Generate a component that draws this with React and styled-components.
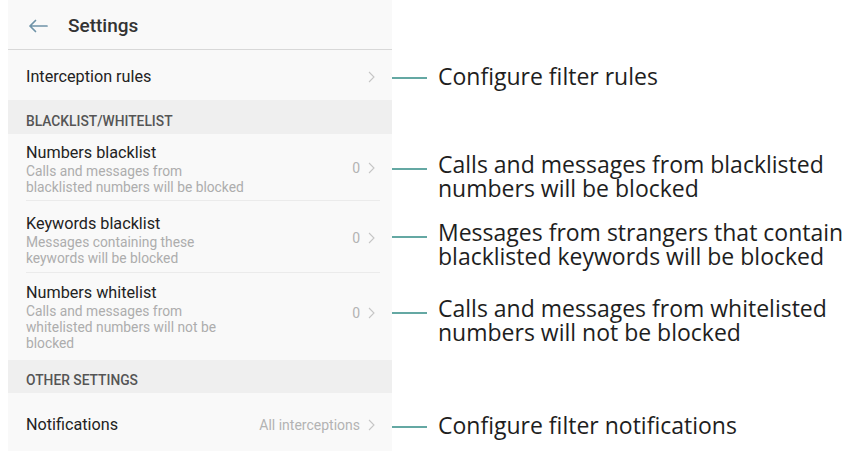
import React from 'react';
import styled, { createGlobalStyle } from 'styled-components';

const GlobalStyle = createGlobalStyle`
  html, body {
    margin: 0;
    padding: 0;
    background: #ffffff;
  }
  body {
    font-family: Roboto, "Liberation Sans", sans-serif;
  }
`;

const Page = styled.div`
  width: 848px;
  height: 451px;
  overflow: hidden;
  display: flex;
  flex-direction: column;
`;

const Row = styled.div`
  display: flex;
  align-items: stretch;
  height: ${(p) => p.$h}px;
  flex: none;
`;

const Cell = styled.div`
  width: 384px;
  margin-left: 8px;
  flex: none;
  box-sizing: border-box;
  background: ${(p) => (p.$band ? '#efefef' : '#f9f9f9')};
  display: flex;
  align-items: ${(p) => (p.$band ? 'flex-end' : 'flex-start')};
  padding: ${(p) => (p.$band ? `0 0 ${p.$bottom}px 18px` : `${p.$top}px 17px 0 18px`)};
  position: relative;
  border-bottom: ${(p) => (p.$line === 'dark' ? '1.5px solid #d8d8d8' : 'none')};

  &::after {
    content: '';
    display: ${(p) => (p.$line === 'light' ? 'block' : 'none')};
    position: absolute;
    left: 18px;
    right: 12px;
    bottom: 0;
    height: 1px;
    background: #ebebeb;
  }
`;

const Header = styled.div`
  display: flex;
  align-items: center;
  gap: 20px;
  padding-left: 2px;
  font-size: 19px;
  line-height: 24px;
  font-weight: 500;
  color: #333;
`;

const BandLabel = styled.div`
  font-size: 13.8px;
  line-height: 16px;
  font-weight: 500;
  color: #555;
`;

const Texts = styled.div`
  flex: 1;
  display: flex;
  flex-direction: column;
`;

const Title = styled.div`
  font-size: 16.2px;
  line-height: 20px;
  color: #222;
`;

const Sub = styled.div`
  font-size: 13.8px;
  line-height: 16px;
  color: #adadad;
  white-space: pre-line;
`;

const Value = styled.div`
  display: flex;
  align-items: center;
  gap: 8px;
  height: 16px;
  font-size: 14px;
  line-height: 16px;
  color: #b3b3b3;
  margin-top: ${(p) => p.$y}px;
`;

const Annotation = styled.div`
  display: flex;
  align-items: flex-start;
  padding-top: ${(p) => p.$top}px;
`;

const Connector = styled.div`
  width: 39px;
  height: 2px;
  background: #64a8a3;
  margin: ${(p) => p.$off}px 11px 0 -4px;
  flex: none;
`;

const Note = styled.div`
  font-family: "Open Sans", "Noto Sans", sans-serif;
  font-size: 23px;
  line-height: 24px;
  color: #1e1e1e;
  white-space: pre-line;
`;

const Chevron = () => (
  <svg width="7" height="12" viewBox="0 0 7 12">
    <polyline points="1,1 6,6 1,11" fill="none" stroke="#c6c6c6" strokeWidth="1.1" />
  </svg>
);

const BackArrow = () => (
  <svg width="20" height="14" viewBox="0 0 20 14">
    <path d="M19 7H2M7.5 1.5L2 7l5.5 5.5" fill="none" stroke="#6f93a8" strokeWidth="1.7" strokeLinecap="round" strokeLinejoin="round" />
  </svg>
);

const items = [
  {
    title: 'Numbers blacklist',
    sub: 'Calls and messages from\nblacklisted numbers will be blocked',
    h: 67,
    top: 9,
    valueY: 17,
    noteTop: 18,
    note: 'Calls and messages from blacklisted\nnumbers will be blocked',
  },
  {
    title: 'Keywords blacklist',
    sub: 'Messages containing these\nkeywords will be blocked',
    h: 72,
    top: 13,
    valueY: 16,
    noteTop: 19,
    note: 'Messages from strangers that contain\nblacklisted keywords will be blocked',
  },
  {
    title: 'Numbers whitelist',
    sub: 'Calls and messages from\nwhitelisted numbers will not be\nblocked',
    h: 87,
    top: 10,
    valueY: 22,
    noteTop: 23,
    note: 'Calls and messages from whitelisted\nnumbers will not be blocked',
  },
];

const App = () => (
  <Page>
    <GlobalStyle />
    <Row $h={50}>
      <Cell $line="dark" $top={14}>
        <Header>
          <BackArrow />
          Settings
        </Header>
      </Cell>
    </Row>
    <Row $h={50}>
      <Cell $top={17}>
        <Texts>
          <Title>Interception rules</Title>
        </Texts>
        <Value $y={2}>
          <Chevron />
        </Value>
      </Cell>
      <Annotation $top={14}>
        <Connector $off={13} />
        <Note>Configure filter rules</Note>
      </Annotation>
    </Row>
    <Row $h={34}>
      <Cell $band $bottom={5}>
        <BandLabel>BLACKLIST/WHITELIST</BandLabel>
      </Cell>
    </Row>
    {items.map((it, i) => (
      <Row key={it.title} $h={it.h}>
        <Cell $top={it.top} $line={i < items.length - 1 ? 'light' : undefined}>
          <Texts>
            <Title>{it.title}</Title>
            <Sub>{it.sub}</Sub>
          </Texts>
          <Value $y={it.valueY}>
            0
            <Chevron />
          </Value>
        </Cell>
        <Annotation $top={it.noteTop}>
          <Connector $off={16} />
          <Note>{it.note}</Note>
        </Annotation>
      </Row>
    ))}
    <Row $h={33}>
      <Cell $band $bottom={5}>
        <BandLabel>OTHER SETTINGS</BandLabel>
      </Cell>
    </Row>
    <Row $h={58}>
      <Cell $top={22}>
        <Texts>
          <Title>Notifications</Title>
        </Texts>
        <Value $y={2}>
          All interceptions
          <Chevron />
        </Value>
      </Cell>
      <Annotation $top={20}>
        <Connector $off={13} />
        <Note>Configure filter notifications</Note>
      </Annotation>
    </Row>
  </Page>
);

export default App;
